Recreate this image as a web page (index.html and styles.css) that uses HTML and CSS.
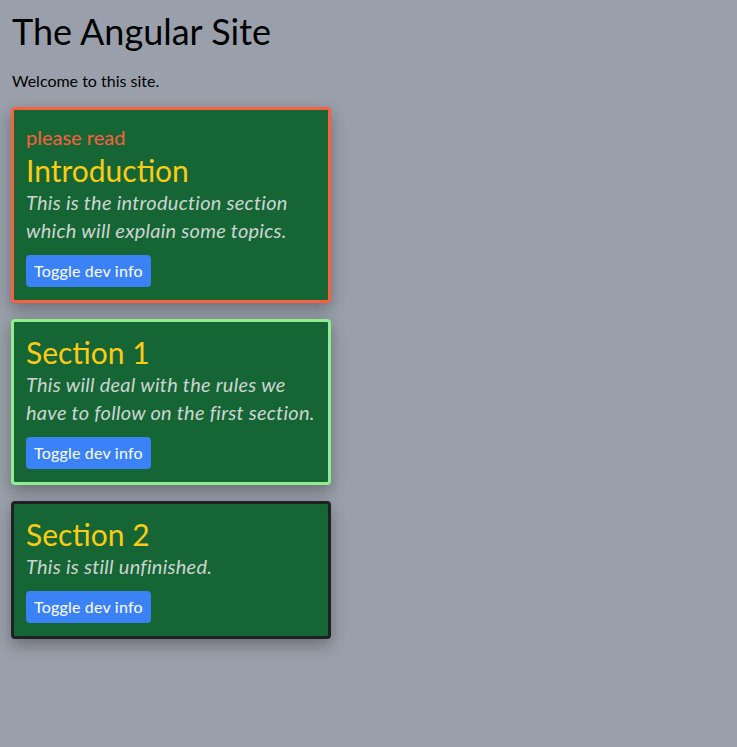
FILE: index.html
```html
<!DOCTYPE html>
<html>
<head>
<meta charset="utf-8">
<link rel="stylesheet" href="styles.css">
</head>
<body>
<div class="page">
  <h1 class="title">The Angular Site</h1>
  <p class="welcome">Welcome to this site.</p>
  <div class="cards">
    <div class="card card-red">
      <div class="tag">please read</div>
      <h2 class="card-title">Introduction</h2>
      <p class="card-text">This is the introduction section which will explain some topics.</p>
      <button class="btn">Toggle dev info</button>
    </div>
    <div class="card card-green">
      <h2 class="card-title">Section 1</h2>
      <p class="card-text">This will deal with the rules we have to follow on the first section.</p>
      <button class="btn">Toggle dev info</button>
    </div>
    <div class="card card-dark">
      <h2 class="card-title">Section 2</h2>
      <p class="card-text">This is still unfinished.</p>
      <button class="btn">Toggle dev info</button>
    </div>
  </div>
</div>
</body>
</html>
```
FILE: styles.css
```css
html, body {
  margin: 0;
  padding: 0;
  background: #9aa0ab;
  height: 100%;
}
body {
  font-family: Lato, "Open Sans", sans-serif;
  color: #000;
}
.page {
  padding: 10px 11px;
}
.title {
  margin: 0 0 0 1px;
  font-size: 36px;
  line-height: 43px;
  font-weight: 400;
}
.welcome {
  margin: 16px 0 0 1px;
  font-size: 16px;
  line-height: 24px;
}
.cards {
  display: flex;
  flex-direction: column;
  gap: 16px;
  margin-top: 14px;
}
.card {
  width: 320px;
  box-sizing: border-box;
  background: #166534;
  border: 3px solid #222;
  border-radius: 4px;
  padding: 12px 6px 13px 12px;
  box-shadow: 0 6px 16px rgba(0, 0, 0, 0.32);
  display: flex;
  flex-direction: column;
  align-items: flex-start;
}
.card-red { border-color: #f9603f; }
.card-green { border-color: #90ee90; }
.card-dark { border-color: #1f2124; }
.tag {
  color: #f9603f;
  font-size: 20px;
  line-height: 29px;
  margin-top: 1px;
}
.card-title {
  margin: 0;
  color: #facc15;
  font-size: 30px;
  line-height: 36px;
  font-weight: 400;
}
.card-text {
  margin: 0 0 11px 0;
  color: #ccd5d3;
  font-size: 20px;
  line-height: 28px;
  font-style: italic;
  letter-spacing: 0.25px;
}
.btn {
  font-family: inherit;
  font-size: 16px;
  line-height: 24px;
  padding: 4px 8px;
  border: none;
  border-radius: 4px;
  background: #3b82f6;
  color: #fff;
  letter-spacing: 0.2px;
}
```
